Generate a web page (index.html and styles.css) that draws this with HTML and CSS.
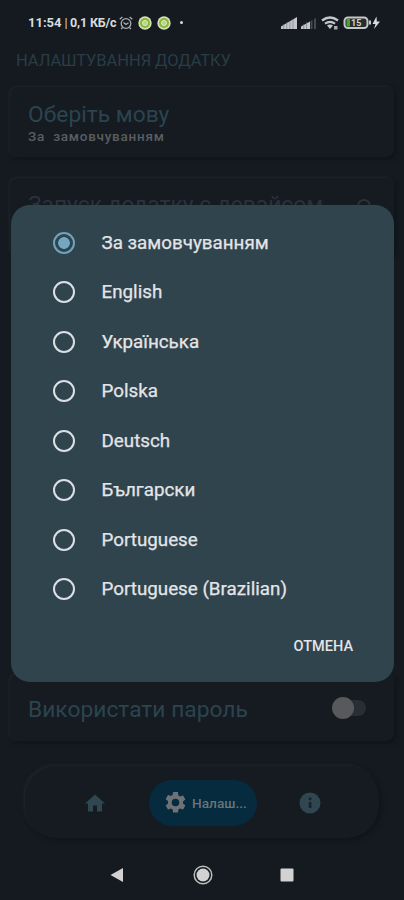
FILE: index.html
```html
<!DOCTYPE html>
<html lang="uk">
<head>
<meta charset="utf-8">
<meta name="viewport" content="width=device-width, initial-scale=1">
<title>Налаштування додатку</title>
<link rel="stylesheet" href="styles.css">
</head>
<body>
<div class="screen">
  <header class="status">
    <span class="status-time">11:54</span><span class="status-sep">|</span><span class="status-speed">0,1 КБ/с</span>
    <svg class="alarm" viewBox="0 0 14 14" width="14" height="14"><g fill="none" stroke="#aeb1b4" stroke-width="1.3"><circle cx="7" cy="7.5" r="4.8"/><path d="M.7 3.2 3.4 1M13.3 3.2 10.6 1M4.5 6.5 7 8.5 9.5 6.7M3.5 11.5 2.2 13M10.5 11.5 11.8 13"/></g></svg>
    <svg class="app" viewBox="0 0 14 14" width="14" height="14"><circle cx="7" cy="7" r="6.7" fill="#d3dfbb"/><circle cx="7" cy="7" r="5" fill="#86b92f"/><circle cx="7" cy="7" r="2.5" fill="#b9d389" stroke="#e1ecd0"/></svg>
    <svg class="app" viewBox="0 0 14 14" width="14" height="14"><circle cx="7" cy="7" r="6.7" fill="#d3dfbb"/><circle cx="7" cy="7" r="5" fill="#86b92f"/><circle cx="7" cy="7" r="2.5" fill="#b9d389" stroke="#e1ecd0"/></svg>
    <span class="dot"></span>
    <svg class="system" viewBox="0 0 100 16" width="100" height="16">
      <g fill="#c5c6ca"><path d="M0 14v-2.500l16-9.500v12z"/><path d="M20 14v-2.500l9-5v7.500z"/></g>
      <path d="M2.700 9v5M5.800 7v7M8.900 6v8M12 4v10M22.700 9v5M25.500 7v7" stroke="#6d7074" stroke-width=".6"/>
      <path d="M29.500 14V6l2-1v9zM33 14V4l2-1v11z" fill="#45494d"/>
      <g fill="none" stroke="#c5c6ca" stroke-width="2.300"><path d="M41 5.500Q49 -.500 57 5.500M44 8.700Q49 5 54 8.700"/></g><path d="M46 10.500q3-2 6 0l-3 3.500z" fill="#c5c6ca"/><path d="M53 11h3.500v3.500H53z" fill="#a7a9ac"/>
      <rect x="63.500" y="2.500" width="23" height="10.500" rx="3.500" fill="#252e2b" stroke="#c5c6ca" stroke-width="2"/><path d="M65.500 4h3.500v7.500h-3.500z" fill="#49a52c"/><path d="M88 5.500h2v4h-2z" fill="#c5c6ca"/>
      <text x="70" y="11" class="battery-label">15</text>
      <path d="M95.500 1.500 91.500 9h3l-1.500 5L99 6.500h-3.200z" fill="#dadbdd"/>
    </svg>
  </header>

  <main class="settings">
    <h1>НАЛАШТУВАННЯ ДОДАТКУ</h1>
    <section class="card language">
      <h2>Оберіть мову</h2>
      <p>За&nbsp; замовчуванням</p>
    </section>
    <section class="card startup">
      <h2>Запуск додатку с девайсом</h2><span class="startup-switch"></span>
    </section>
    <section class="card password">
      <h2>Використати пароль</h2><span class="switch"></span>
    </section>
  </main>

  <nav class="tabs">
    <svg class="home" viewBox="2 3 20 17" width="20" height="18"><path fill="#304650" d="M10 20v-6h4v6h5v-8h3L12 3 2 12h3v8z"/></svg>
    <div class="active">
      <svg viewBox="2 2 20 20" width="21" height="21"><path fill="#6c7275" d="M19.140 12.940a7.500 7.500 0 0 0 0-1.880l2.030-1.580a.5.5 0 0 0 .12-.61l-1.920-3.320a.5.5 0 0 0-.59-.22l-2.390.96a7 7 0 0 0-1.620-.94l-.36-2.540A.5.5 0 0 0 13.930 2h-3.840a.5.5 0 0 0-.47.410l-.36 2.540a7 7 0 0 0-1.620.94l-2.390-.96a.5.5 0 0 0-.59.220L2.740 8.470a.5.5 0 0 0 .12.610l2.030 1.580a7.500 7.500 0 0 0 0 2.280l-2.030 1.580a.5.5 0 0 0-.12.610l1.920 3.320c.12.220.37.290.59.220l2.390-.96c.5.380 1.030.7 1.620.94l.36 2.540c.05.240.24.410.48.410h3.840c.24 0 .44-.17.470-.41l.36-2.540a7 7 0 0 0 1.620-.94l2.390.96c.22.080.47 0 .59-.22l1.920-3.320a.5.5 0 0 0-.12-.61zM12 15.600a3.600 3.600 0 1 1 0-7.200 3.600 3.600 0 0 1 0 7.200z"/></svg>
      <span>Налаш...</span>
    </div>
    <svg class="info" viewBox="0 0 22 22" width="22" height="22"><circle cx="11" cy="11" r="10.500" fill="#304650"/><path fill="#18242c" d="M9.800 5.500h2.600v2.800H9.800zM9.800 10h2.600v6H9.800z"/></svg>
  </nav>

  <footer class="system-nav">
    <svg viewBox="0 0 14 16" width="14" height="16"><path d="M.5 8 13 1v14z" fill="#d2d2d3"/></svg>
    <svg viewBox="0 0 20 20" width="20" height="20"><circle cx="10" cy="10" r="8.800" fill="none" stroke="#bcbdbe" stroke-width="1.500"/><circle cx="10" cy="10" r="6.500" fill="#d2d2d3"/></svg>
    <svg viewBox="0 0 14 14" width="14" height="14"><rect x=".5" y=".5" width="13" height="13" rx="1" fill="#d2d2d3"/></svg>
  </footer>

  <div class="dialog" role="dialog">
    <ul>
      <li class="selected"><i></i><span>За замовчуванням</span></li>
      <li><i></i><span>English</span></li>
      <li><i></i><span>Українська</span></li>
      <li><i></i><span>Polska</span></li>
      <li><i></i><span>Deutsch</span></li>
      <li><i></i><span>Български</span></li>
      <li><i></i><span>Portuguese</span></li>
      <li><i></i><span>Portuguese (Brazilian)</span></li>
    </ul>
    <button type="button">ОТМЕНА</button>
  </div>
</div>
</body>
</html>
```
FILE: styles.css
```css
* { box-sizing: border-box; }
body { margin: 0; background: #141a20; font-family: Roboto, "Noto Sans", sans-serif; }
h1, h2, p, ul { margin: 0; padding: 0; }
svg { display: block; flex: none; }
.screen { position: relative; display: flex; flex-direction: column; width: 404px; height: 900px; overflow: hidden; background: #141a20; }

.status { display: flex; align-items: center; height: 46px; padding: 0 23px 0 28px; color: #d9dadd; font-size: 12.5px; font-weight: 700; white-space: nowrap; }
.status-time { width: 34px; font-size: 13px; }
.status-sep { width: 8px; text-align: center; font-weight: 400; }
.status-speed { width: 47px; letter-spacing: -.15px; }
.alarm { margin: 0 5px 0 2px; }
.app { margin-right: 5px; }
.dot { width: 3px; height: 3px; margin-left: 4px; border-radius: 50%; background: #d9dadd; }
.system { margin-left: auto; }
.battery-label { fill: #d2d3d5; font: 700 9px Roboto, sans-serif; }

.settings { display: flex; flex-direction: column; flex: none; height: 714px; padding: 0 10px; }
h1 { height: 42px; padding: 5px 0 0 6px; color: #2a3c45; font-size: 16.5px; font-weight: 400; line-height: 22px; letter-spacing: -.08px; white-space: nowrap; }
.card { flex: none; border-radius: 8px; background: #151b21; box-shadow: -1px -1px 3px #1e2a2c, 2px 2px 4px #0e1418; }
.card h2 { color: #2b444f; font-size: 22.8px; font-weight: 400; line-height: 28px; white-space: nowrap; }
.language { height: 70px; padding: 14px 18px; }
.language p { color: #5a5e61; font-size: 13.5px; font-weight: 500; line-height: 14px; letter-spacing: .75px; }
.startup { display: flex; height: 79px; margin-top: 21px; padding: 13px 18px; }
.startup h2 { color: #27333a; }
.startup-switch { width: 14px; height: 14px; margin: 8px 5px 0 auto; border: 2px solid #2c3236; border-radius: 50%; }
.password { display: flex; align-items: center; height: 67px; margin-top: auto; margin-bottom: 18px; padding: 1px 28px 0 18px; }
.password h2 { padding-top: 3px; }
.switch { position: relative; width: 30px; height: 16px; margin: 0 0 0 auto; border-radius: 8px; background: #292e32; }
.switch::before { content: ""; position: absolute; left: -4px; top: -3px; width: 22px; height: 22px; border-radius: 50%; background: #57595b; }

.tabs { display: flex; align-items: center; flex: none; width: 354px; height: 72px; margin: 7px 0 0 25px; padding: 1px 60px 0; border-radius: 32px; background: #151b21; box-shadow: -2px -2px 3px #1c2426, 2px 2px 4px #0e1619; }
.active { display: flex; align-items: center; flex: none; width: 108px; height: 46px; margin-left: 44px; padding-left: 16px; border-radius: 23px; background: #062a3e; color: #66747c; font-size: 13.7px; font-weight: 500; white-space: nowrap; }
.active span { margin-left: 6px; }
.info { margin-left: 42px; }

.system-nav { display: flex; align-items: center; flex: none; height: 50px; margin-top: 12px; padding-left: 110px; }
.system-nav svg:nth-child(2) { margin: 0 67px 0 69px; }

.dialog { position: absolute; top: 205px; left: 11px; width: 383px; height: 477px; padding: 13px 33px 0 42px; border-radius: 19px; background: #30444e; color: #e4e5e8; }
.dialog li { display: flex; align-items: center; gap: 26.5px; height: 49.5px; font-size: 18.8px; font-weight: 400; list-style: none; white-space: nowrap; -webkit-text-stroke: .25px currentColor; }
.dialog i { flex: none; width: 22px; height: 22px; border: 2.5px solid #dce0e6; border-radius: 50%; }
.dialog .selected i { border-color: #6fa4bd; background: radial-gradient(circle, #72a8c2 0 5.5px, transparent 6.2px); }
.dialog button { display: block; height: 32px; margin: 16px 0 0 auto; padding: 0 8px; border: 0; background: none; color: #e4e5e8; font: 500 14.5px Roboto, sans-serif; }
```
